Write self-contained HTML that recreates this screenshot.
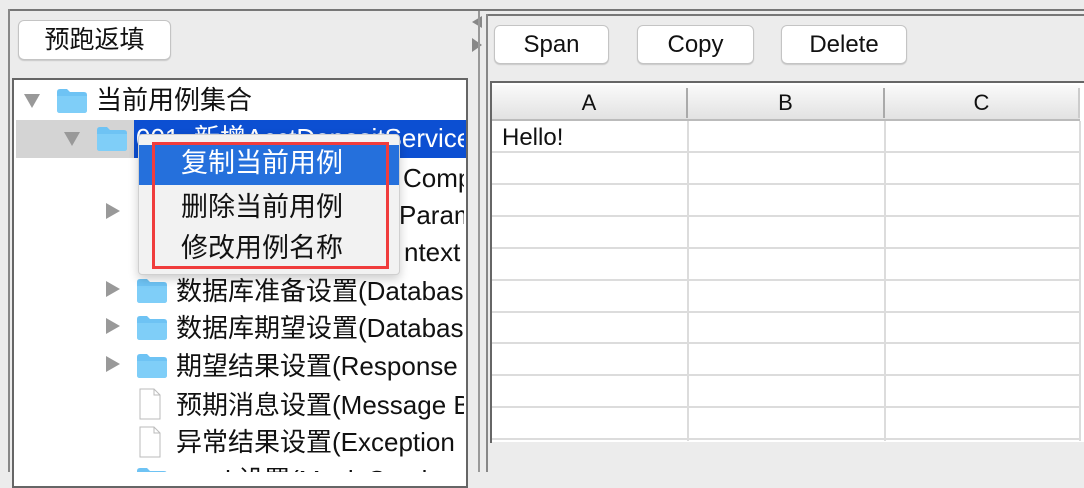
<!DOCTYPE html>
<html><head><meta charset="utf-8"><style>
*{margin:0;padding:0;box-sizing:border-box}
body{width:1084px;height:472px;overflow:hidden;background:#ececec;font-family:"Liberation Sans","Noto Sans CJK SC",sans-serif;position:relative;color:#111}
.a{position:absolute}
.btn{position:absolute;background:#fff;border:1px solid #c4c4c4;border-radius:6px;box-shadow:0 1px 1px rgba(0,0,0,.15);font-size:24px;text-align:center}
.row{position:absolute;left:0;height:38px;line-height:38px;font-size:26px;white-space:nowrap}
</style></head><body>
<div class="a" style="left:8px;top:9px;width:1076px;height:2px;background:#777"></div>
<div class="a" style="left:8px;top:9px;width:2px;height:463px;background:#888"></div>
<div class="btn" style="left:18px;top:20px;width:153px;height:40px;line-height:38px;font-size:25px">预跑返填</div>
<div class="a" style="left:472px;top:16px;border-right:10px solid #888;border-top:6px solid transparent;border-bottom:6px solid transparent"></div>
<div class="a" style="left:472px;top:38px;border-left:10px solid #888;border-top:7px solid transparent;border-bottom:7px solid transparent"></div>
<!-- tree -->
<div class="a" style="left:12px;top:78px;width:456px;height:410px;border:2px solid #666;background:#fff;overflow:hidden">
 <div class="a" style="left:2px;top:40px;width:120px;height:38px;background:#d4d4d4"></div>
 <div class="a" style="left:120px;top:40px;width:340px;height:38px;background:#0c4fd2"></div>
</div>
<div class="a" style="left:16px;top:81px;width:448px;height:391px;overflow:hidden">
 <svg width="448" height="400" style="position:absolute;left:0;top:0">
  <defs><g id="f"><path d="M0 3 Q0 0 3 0 H10 L13 3 H27 Q30 3 30 6 V21 Q30 24 27 24 H3 Q0 24 0 21 Z" fill="#6ec3f4"/><path d="M0 7 H30 V21 Q30 24 27 24 H3 Q0 24 0 21Z" fill="#7fcef8"/></g>
  <g id="d"><path d="M0 0 H14 L20 6 V30 H0 Z" fill="#fff" stroke="#bbb"/><path d="M14 0 V6 H20" fill="none" stroke="#bbb"/></g></defs>
  <path d="M8 13 L24 13 L16 27Z" fill="#999"/>
  <use href="#f" x="41" y="8"/>
  <path d="M48 51 L64 51 L56 65Z" fill="#999"/>
  <use href="#f" x="81" y="46"/>
  <path d="M90 122 L104 130 L90 138Z" fill="#999"/>
  <path d="M90 200 L104 208 L90 216Z" fill="#999"/>
  <use href="#f" x="121" y="198"/>
  <path d="M90 237 L104 245 L90 253Z" fill="#999"/>
  <use href="#f" x="121" y="235"/>
  <path d="M90 275 L104 283 L90 291Z" fill="#999"/>
  <use href="#f" x="121" y="273"/>
  <use href="#d" x="124" y="308"/>
  <use href="#d" x="124" y="346"/>
  <use href="#f" x="121" y="387"/>
 </svg>
 <div class="row" style="top:0;left:80px">当前用例集合</div>
 <div class="row" style="top:38px;left:120px;color:#fff">001_新增AcctDepositService</div>
 <div class="row" style="top:78px;left:387px">Comp</div>
 <div class="row" style="top:115px;left:383px">Param</div>
 <div class="row" style="top:152px;left:388px">ntext</div>
 <div class="row" style="top:191px;left:160px">数据库准备设置(Database</div>
 <div class="row" style="top:228px;left:160px">数据库期望设置(Database</div>
 <div class="row" style="top:266px;left:160px">期望结果设置(Response</div>
 <div class="row" style="top:305px;left:160px">预期消息设置(Message B</div>
 <div class="row" style="top:342px;left:160px">异常结果设置(Exception</div>
 <div class="row" style="top:380px;left:160px">mock设置(Mock Service</div>
</div>
<!-- menu -->
<div class="a" style="left:138px;top:134px;width:262px;height:141px;background:#f2f2f2;border:1px solid #d0d0d0;border-radius:4px;box-shadow:0 4px 10px rgba(0,0,0,.2)">
 <div class="a" style="left:0;top:10px;width:260px;height:40px;background:#2570dc"></div>
 <div class="a" style="left:42px;top:8px;font-size:27px;line-height:40px;color:#fff">复制当前用例</div>
 <div class="a" style="left:42px;top:52px;font-size:27px;line-height:40px">删除当前用例</div>
 <div class="a" style="left:42px;top:93px;font-size:27px;line-height:40px">修改用例名称</div>
</div>
<div class="a" style="left:152px;top:142px;width:237px;height:127px;border:3px solid #f03c3c"></div>
<!-- right -->
<div class="a" style="left:478px;top:11px;width:2px;height:461px;background:#999"></div>
<div class="a" style="left:486px;top:14px;width:598px;height:2px;background:#777"></div>
<div class="a" style="left:486px;top:14px;width:2px;height:458px;background:#888"></div>
<div class="btn" style="left:494px;top:25px;width:115px;height:39px;line-height:38px">Span</div>
<div class="btn" style="left:637px;top:25px;width:117px;height:39px;line-height:38px">Copy</div>
<div class="btn" style="left:781px;top:25px;width:126px;height:39px;line-height:38px">Delete</div>
<div class="a" style="left:490px;top:81px;width:594px;height:2px;background:#666"></div>
<div class="a" style="left:490px;top:81px;width:2px;height:362px;background:#666"></div>
<div class="a" style="left:492px;top:83px;width:592px;height:359px;background:#fff">
 <div class="a" style="left:0;top:2px;width:588px;height:36px;background:linear-gradient(#fafafa,#e2e2e2);border-bottom:2px solid #bbb;font-size:22px;line-height:36px">
  <div class="a" style="left:0;width:196px;text-align:center;border-right:2px solid #aaa;height:30px;top:3px;line-height:30px">A</div>
  <div class="a" style="left:196px;width:197px;text-align:center;border-right:2px solid #aaa;height:30px;top:3px;line-height:30px">B</div>
  <div class="a" style="left:393px;width:195px;text-align:center;border-right:2px solid #ccc;height:30px;top:3px;line-height:30px">C</div>
 </div>
 <svg class="a" style="left:0;top:38px" width="592" height="322">
  <g stroke="#dcdcdc" stroke-width="2">
   <line x1="196" y1="0" x2="196" y2="320"/><line x1="393" y1="0" x2="393" y2="320"/><line x1="588" y1="0" x2="588" y2="320"/>
   <line x1="0" y1="31" x2="588" y2="31"/><line x1="0" y1="63" x2="588" y2="63"/><line x1="0" y1="95" x2="588" y2="95"/>
   <line x1="0" y1="127" x2="588" y2="127"/><line x1="0" y1="159" x2="588" y2="159"/><line x1="0" y1="191" x2="588" y2="191"/>
   <line x1="0" y1="222" x2="588" y2="222"/><line x1="0" y1="254" x2="588" y2="254"/><line x1="0" y1="286" x2="588" y2="286"/>
   <line x1="0" y1="318" x2="588" y2="318"/>
  </g>
 </svg>
 <div class="a" style="left:10px;top:40px;font-size:24px;line-height:30px">Hello!</div>
</div>
<div class="a" style="left:492px;top:442px;width:592px;height:30px;background:#ececec"></div>
</body></html>
